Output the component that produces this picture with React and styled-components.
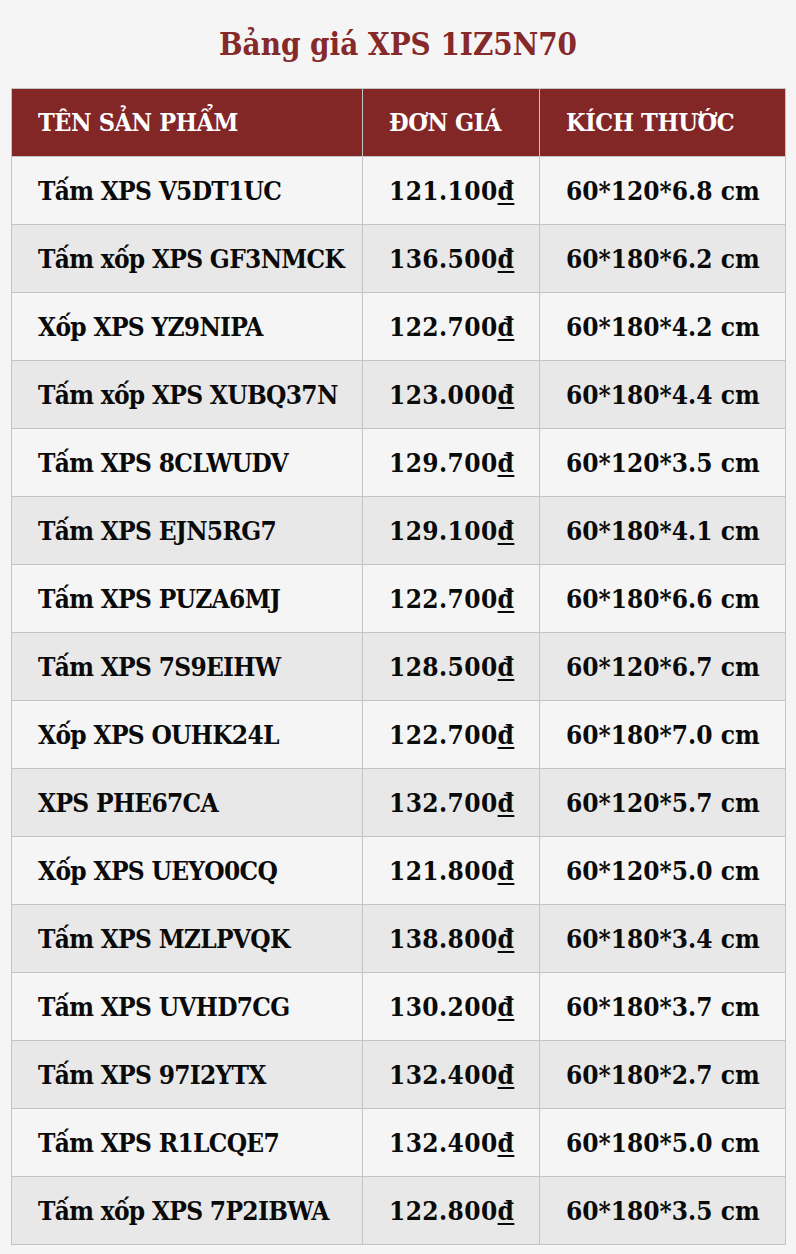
import React from "react";
import styled, { createGlobalStyle } from "styled-components";

const Global = createGlobalStyle`
  html, body { margin: 0; padding: 0; background: #f5f5f5; }
  body { font-family: "DejaVu Serif Condensed", "DejaVu Serif", serif; }
`;

const Page = styled.div`
  padding: 22px 11px 10px;
  display: flex;
  flex-direction: column;
  align-items: stretch;
`;

const Title = styled.h1`
  margin: 0 0 22px;
  text-align: center;
  color: #85292a;
  font-size: 31px;
  font-weight: 700;
  line-height: 44px;
`;

const Table = styled.table`
  width: 100%;
  border-collapse: collapse;
  table-layout: fixed;
  border: 1px solid #c4c4c4;
`;

const Th = styled.th`
  background: #832626;
  color: #ffffff;
  text-align: left;
  font-size: 25px;
  font-weight: 700;
  letter-spacing: -0.4px;
  height: 68px;
  padding: 0 0 0 26px;
  border: 1px solid #c4c4c4;
  box-sizing: border-box;
  width: ${(p) => p.$w}px;
`;

const Tr = styled.tr`
  background: ${(p) => (p.$alt ? "#e8e8e8" : "#f5f5f5")};
`;

const Td = styled.td`
  font-size: 26px;
  font-weight: 700;
  color: #0a0a0a;
  letter-spacing: ${(p) => p.$ls || "0px"};
  height: 68px;
  padding: 0 0 0 26px;
  border: 1px solid #c4c4c4;
  box-sizing: border-box;
  white-space: nowrap;
`;

const Dong = styled.span`
  text-decoration: underline;
  text-underline-offset: 3px;
`;

const rows = [
  ["Tấm XPS V5DT1UC", "121.100", "60*120*6.8 cm"],
  ["Tấm xốp XPS GF3NMCK", "136.500", "60*180*6.2 cm"],
  ["Xốp XPS YZ9NIPA", "122.700", "60*180*4.2 cm"],
  ["Tấm xốp XPS XUBQ37N", "123.000", "60*180*4.4 cm"],
  ["Tấm XPS 8CLWUDV", "129.700", "60*120*3.5 cm"],
  ["Tấm XPS EJN5RG7", "129.100", "60*180*4.1 cm"],
  ["Tấm XPS PUZA6MJ", "122.700", "60*180*6.6 cm"],
  ["Tấm XPS 7S9EIHW", "128.500", "60*120*6.7 cm"],
  ["Xốp XPS OUHK24L", "122.700", "60*180*7.0 cm"],
  ["XPS PHE67CA", "132.700", "60*120*5.7 cm"],
  ["Xốp XPS UEYO0CQ", "121.800", "60*120*5.0 cm"],
  ["Tấm XPS MZLPVQK", "138.800", "60*180*3.4 cm"],
  ["Tấm XPS UVHD7CG", "130.200", "60*180*3.7 cm"],
  ["Tấm XPS 97I2YTX", "132.400", "60*180*2.7 cm"],
  ["Tấm XPS R1LCQE7", "132.400", "60*180*5.0 cm"],
  ["Tấm xốp XPS 7P2IBWA", "122.800", "60*180*3.5 cm"],
];

export default function App() {
  return (
    <>
      <Global />
      <Page>
        <Title>Bảng giá XPS 1IZ5N70</Title>
        <Table>
          <thead>
            <tr>
              <Th $w={351}>TÊN SẢN PHẨM</Th>
              <Th $w={177}>ĐƠN GIÁ</Th>
              <Th $w={246}>KÍCH THƯỚC</Th>
            </tr>
          </thead>
          <tbody>
            {rows.map((r, i) => (
              <Tr key={i} $alt={i % 2 === 1}>
                <Td $ls="-0.7px">{r[0]}</Td>
                <Td $ls="0.4px">
                  {r[1]}
                  <Dong>đ</Dong>
                </Td>
                <Td>{r[2]}</Td>
              </Tr>
            ))}
          </tbody>
        </Table>
      </Page>
    </>
  );
}
